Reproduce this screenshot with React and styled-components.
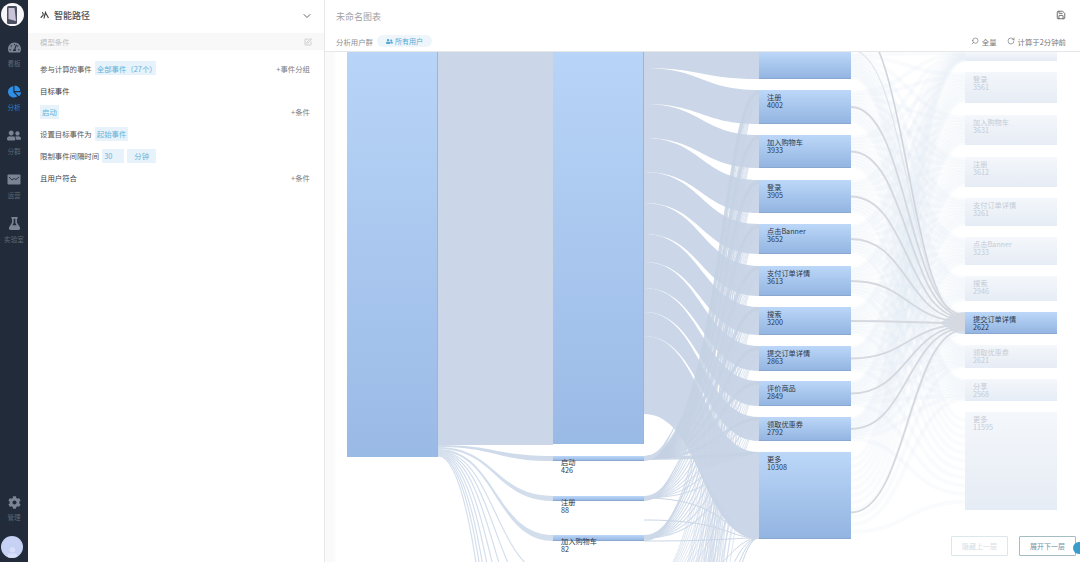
import React from "react";
import styled, { createGlobalStyle } from "styled-components";
import { ChevronDown, Save, Search, RotateCw, SquarePen } from "lucide-react";
import { FaTachometerAlt, FaChartPie, FaUserFriends, FaFlask, FaCog, FaUser } from "react-icons/fa";

const FONT = '"Noto Sans CJK SC", "Liberation Sans", sans-serif';

const col3 = [
  { top: 52, bottom: 79, from: 52, to: 68 },
  { name: "注册", value: 4002, top: 90, bottom: 124, from: 68, to: 104 },
  { name: "加入购物车", value: 3933, top: 135, bottom: 168, from: 104, to: 138 },
  { name: "登录", value: 3905, top: 180, bottom: 213, from: 138, to: 172 },
  { name: "点击Banner", value: 3652, top: 224, bottom: 254, from: 172, to: 203 },
  { name: "支付订单详情", value: 3613, top: 266, bottom: 296, from: 203, to: 234 },
  { name: "搜索", value: 3200, top: 307, bottom: 335, from: 234, to: 262 },
  { name: "提交订单详情", value: 2863, top: 346, bottom: 371, from: 262, to: 288 },
  { name: "评价商品", value: 2849, top: 381, bottom: 406, from: 288, to: 312 },
  { name: "领取优惠券", value: 2792, top: 417, bottom: 441, from: 312, to: 336 },
  { name: "更多", value: 10308, top: 452, bottom: 539, from: 336, to: 414 },
];

const col4 = [
  { top: 52, bottom: 61 },
  { name: "登录", value: 3561, top: 72, bottom: 103 },
  { name: "加入购物车", value: 3631, top: 115, bottom: 145 },
  { name: "注册", value: 3612, top: 157, bottom: 187 },
  { name: "支付订单详情", value: 3261, top: 198, bottom: 226 },
  { name: "点击Banner", value: 3233, top: 237, bottom: 265 },
  { name: "搜索", value: 2946, top: 276, bottom: 301 },
  { name: "提交订单详情", value: 2622, top: 312, bottom: 334, active: true },
  { name: "领取优惠券", value: 2621, top: 345, bottom: 368 },
  { name: "分享", value: 2568, top: 379, bottom: 401 },
  { name: "更多", value: 11595, top: 412, bottom: 510 },
];

const small = [
  { name: "启动", value: 426, top: 456, bottom: 461 },
  { name: "注册", value: 88, top: 496, bottom: 501 },
  { name: "加入购物车", value: 82, top: 535, bottom: 541 },
];

const ribbon = (x0, a0, b0, x1, a1, b1) => {
  const m = (x0 + x1) / 2;
  return `M${x0} ${a0}C${m} ${a0} ${m} ${a1} ${x1} ${a1}L${x1} ${b1}C${m} ${b1} ${m} ${b0} ${x0} ${b0}Z`;
};

const curve = (x0, y0, x1, y1, skew = 0) => {
  const m = (x0 + x1) / 2 + skew;
  return `M${x0} ${y0}C${m} ${y0} ${m} ${y1} ${x1} ${y1}`;
};

// a ribbon that runs out to a point, used where a small node fans out
const taper = (x0, a, b, x1, y) => {
  const m = (x0 + x1) / 2;
  return `M${x0} ${a}C${m} ${a} ${m} ${y} ${x1} ${y}C${m} ${y} ${m} ${b} ${x0} ${b}Z`;
};

// sources below the fold of the chart, they only show as stripes near the bottom
const lowSources = [590, 640, 700, 770, 850];

const SankeyLinks = () => (
  <Links viewBox="325 52 755 510" preserveAspectRatio="none">
    {/* column 3 to column 4, the faded mesh */}
    {col3.map((a, i) =>
      col4.map((b, j) => (
        <path
          key={`mesh-${i}-${j}`}
          d={curve(851, a.top + ((a.bottom - a.top) * (j + 1)) / 12, 965, b.top + ((b.bottom - b.top) * (i + 1)) / 12)}
          fill="none"
          stroke="#e2eaf5"
          strokeOpacity="0.2"
          strokeWidth="4"
        />
      ))
    )}

    {/* column 1 to column 2 */}
    <rect x="438" y="52" width="115" height="393" fill="#cbd7e8" />
    <path d={ribbon(438, 445, 447, 553, 456, 461)} fill="#cfdbeb" />
    <path d={ribbon(438, 447, 449, 553, 496, 501)} fill="#d2deec" />
    <path d={ribbon(438, 449, 451, 553, 535, 541)} fill="#d2deec" />
    {[575, 610, 650, 700, 760, 830, 900, 990].map((y, i) => (
      <path key={y} d={curve(438, 451 + i * 0.7, 553, y)} fill="none" stroke="#d4dfed" strokeWidth="1.2" />
    ))}

    {/* column 2 to column 3 */}
    {col3.map((n, i) => (
      <path key={`r-${i}`} d={ribbon(644, n.from, n.to, 759, n.top, n.bottom)} fill="#cbd7e8" />
    ))}
    {col3.slice(1).map((n, i) => (
      <path
        key={`arc-${i}`}
        d={curve(644, 458, 759, n.top + 2, 20)}
        fill="none"
        stroke="#c4d1e3"
        strokeOpacity="0.85"
        strokeWidth="3.5"
      />
    ))}
    {col3.slice(1).map((n) =>
      [498, 538].map((y, i) => (
        <path
          key={`small-${n.top}-${y}`}
          d={curve(644, y, 759, n.top + 5 + i * 2, 20)}
          fill="none"
          stroke="#c8d4e6"
          strokeOpacity="0.8"
          strokeWidth="1.1"
        />
      ))
    )}
    {col3.slice(1).map((n) =>
      lowSources.map((y, i) => (
        <path
          key={`low-${n.top}-${y}`}
          d={curve(644, y, 759, n.top + 8 + i, 20)}
          fill="none"
          stroke="#c8d4e6"
          strokeOpacity="0.7"
          strokeWidth="0.8"
        />
      ))
    )}
    <path d={taper(644, 456, 461, 700, 405)} fill="#cdd9e9" />
    <path d={taper(644, 496, 501, 705, 440)} fill="#cdd9e9" />
    <path d={taper(644, 535, 541, 712, 470)} fill="#cdd9e9" />
    {[498, 520, 541, 590, 640, 700, 770].map((y) => (
      <path key={`fan-${y}`} d={curve(644, y, 759, 538, 25)} fill="none" stroke="#cbd6e7" strokeWidth="1" />
    ))}
    <path d="M700 470C718 500 730 530 759 539L759 452Z" fill="#cbd7e8" />

    {/* the highlighted path into column 4 */}
    <path d="M940 323C950 316 955 312 965 312L965 334C955 334 950 330 940 323Z" fill="#d3deeb" />
    <path d={curve(851, 21, 965, 320)} fill="none" stroke="#d0d5dd" strokeWidth="1.6" />
    <path d={curve(851, 50, 965, 319)} fill="none" stroke="#e2e6ec" strokeWidth="1.2" />
    {col3.slice(1).map((n, i) => (
      <path
        key={`hl-${i}`}
        d={curve(851, (n.top + n.bottom) / 2 + (i === 9 ? 17 : 0), 965, 315 + i * 1.6)}
        fill="none"
        stroke="#d5d9df"
        strokeWidth="1.8"
      />
    ))}
  </Links>
);

const App = () => (
  <Page>
    <GlobalStyle />
    <Nav>
      <Logo>
        <svg width="14" height="20" viewBox="0 0 14 20">
          <rect x="2" y="1" width="10" height="18" rx="1.5" fill="#4a4f62" />
          <path d="M3.5 3h6l1.5 13-7.5-2z" fill="#c9c4d8" />
        </svg>
      </Logo>
      <NavItem>
        <FaTachometerAlt size={13} />
        <span>看板</span>
      </NavItem>
      <NavItem $active>
        <FaChartPie size={13} />
        <span>分析</span>
      </NavItem>
      <NavItem>
        <FaUserFriends size={14} />
        <span>分群</span>
      </NavItem>
      <NavItem>
        <svg width="14" height="13" viewBox="0 0 14 13">
          <rect x="0.5" y="1.5" width="13" height="10" rx="1" fill="#7b8493" />
          <path d="M2 4l3 3 2-1.5 2 1 3-2.5" fill="none" stroke="#2a3442" strokeWidth="1" />
        </svg>
        <span>运营</span>
      </NavItem>
      <NavItem>
        <FaFlask size={13} />
        <span>实验室</span>
      </NavItem>
      <NavBottom>
        <NavItem>
          <FaCog size={13} />
          <span>管理</span>
        </NavItem>
        <Avatar>
          <FaUser size={11} />
        </Avatar>
      </NavBottom>
    </Nav>

    <Panel>
      <PanelHead>
        <PanelTitle>
          <svg width="9" height="9" viewBox="0 0 9 9">
            <path d="M1 7c0-2 2.200-1.500 2.200-3.500S2 1.500 3 1.200M4 7.500C4.500 5 5 3 5.500 1.500 6 3 7.500 5 8.500 7" fill="none" stroke="#444" strokeWidth="1.200" />
          </svg>
          智能路径
        </PanelTitle>
        <ChevronDown size={12} color="#666" />
      </PanelHead>
      <ModelBar>
        模型条件
        <SquarePen size={8} color="#bbb" />
      </ModelBar>
      <PanelBody>
        <Row>
          <Inline>
            参与计算的事件
            <Tag $width={61}>全部事件（27个）</Tag>
          </Inline>
          <AddLink>+事件分组</AddLink>
        </Row>
        <Row>
          <Strong>目标事件</Strong>
        </Row>
        <Row>
          <Tag>启动</Tag>
          <AddLink>+条件</AddLink>
        </Row>
        <Row>
          <Inline>
            设置目标事件为
            <Tag>起始事件</Tag>
          </Inline>
        </Row>
        <Row>
          <Inline>
            限制事件间隔时间
            <Tag $width={22}>30</Tag>
            <Tag $width={29} $center>
              分钟
            </Tag>
          </Inline>
        </Row>
        <Row>
          <Strong>且用户符合</Strong>
          <AddLink>+条件</AddLink>
        </Row>
      </PanelBody>
    </Panel>

    <Main>
      <MainHead>
        <TitleRow>
          <Title>未命名图表</Title>
          <Save size={10} color="#555" />
        </TitleRow>
        <FilterRow>
          <Inline>
            分析用户群
            <Pill>
              <FaUserFriends size={7} />
              所有用户
            </Pill>
          </Inline>
          <Status>
            <StatusItem>
              <MirrorIcon>
                <Search size={8} />
              </MirrorIcon>
              全量
            </StatusItem>
            <StatusItem>
              <RotateCw size={8} />
              计算于2分钟前
            </StatusItem>
          </Status>
        </FilterRow>
      </MainHead>

      <Chart>
        <SankeyLinks />
        <Bar $left={347} $top={52} $height={405} />
        <Bar $left={553} $top={52} $height={392} />
        {small.map((n) => (
          <Node key={n.name} $left={553} $top={n.top} $height={n.bottom - n.top}>
            {n.name}
            <br />
            {n.value}
          </Node>
        ))}
        {col3.map((n) => (
          <Node key={n.top} $left={759} $top={n.top} $height={n.bottom - n.top}>
            {n.name}
            <br />
            {n.value}
          </Node>
        ))}
        {col4.map((n) => (
          <Node key={n.top} $left={965} $top={n.top} $height={n.bottom - n.top} $faded={!n.active}>
            {n.name}
            <br />
            {n.value}
          </Node>
        ))}
        <PageButton $left={951} $muted>
          隐藏上一层
        </PageButton>
        <PageButton $left={1019}>展开下一层</PageButton>
        <HelpDot />
      </Chart>
    </Main>
  </Page>
);

const GlobalStyle = createGlobalStyle`
  html, body {
    margin: 0;
    height: 100%;
    overflow: hidden;
    background: #fff;
    font-family: ${FONT};
  }
  * {
    box-sizing: border-box;
  }
`;

const Page = styled.div`
  display: grid;
  grid-template-columns: 28px 297px 1fr;
  width: 1080px;
  height: 562px;
  overflow: hidden;
  color: #555;
  font-size: 7.4px;
`;

const Nav = styled.nav`
  display: flex;
  flex-direction: column;
  align-items: center;
  padding-bottom: 4px;
  background: #212b39;
`;

const Logo = styled.div`
  display: flex;
  align-items: center;
  justify-content: center;
  flex: none;
  width: 23px;
  height: 23px;
  margin: 3px 4px 7px 0;
  border-radius: 50%;
  background: #f7f7f9;
`;

const NavItem = styled.div`
  display: flex;
  flex-direction: column;
  align-items: center;
  gap: 4.5px;
  width: 100%;
  height: 44px;
  padding-top: 8px;
  color: ${(props) => (props.$active ? "#2f8ee6" : "#7b8493")};
  font-size: 6.6px;
  line-height: 8px;

  svg {
    flex: none;
    height: 13px;
  }
  span {
    color: ${(props) => (props.$active ? "#2f7fc9" : "#5f6875")};
    white-space: nowrap;
  }
`;

const NavBottom = styled.div`
  display: flex;
  flex-direction: column;
  align-items: center;
  gap: 3px;
  width: 100%;
  margin-top: auto;

  ${NavItem} {
    height: auto;
    padding-top: 0;
  }
`;

const Avatar = styled.div`
  display: flex;
  align-items: flex-end;
  justify-content: center;
  width: 22px;
  height: 22px;
  margin: 12px 4px 0 0;
  border-radius: 50%;
  overflow: hidden;
  background: #c6d1f4;
  color: #d9e0f8;
`;

const Panel = styled.aside`
  display: flex;
  flex-direction: column;
  border-right: 1px solid #e6e7e9;
`;

const PanelHead = styled.div`
  display: flex;
  align-items: center;
  justify-content: space-between;
  flex: none;
  height: 33px;
  padding: 0 11px 2px 12px;
`;

const PanelTitle = styled.div`
  display: flex;
  align-items: center;
  gap: 5px;
  color: #4c4f55;
  font-size: 9px;
  font-weight: 500;
`;

const ModelBar = styled.div`
  display: flex;
  align-items: center;
  justify-content: space-between;
  flex: none;
  height: 17px;
  padding: 0 12px;
  background: #f8f8f9;
  color: #bcbfc4;
`;

const PanelBody = styled.div`
  display: flex;
  flex-direction: column;
  padding: 7.500px 14px 0 12px;
`;

const Row = styled.div`
  display: flex;
  align-items: center;
  justify-content: space-between;
  height: 21.800px;
`;

const Inline = styled.div`
  display: flex;
  align-items: center;
  gap: 3px;
  white-space: nowrap;
`;

const Strong = styled.div`
  color: #3d4046;
`;

const Tag = styled.span`
  display: inline-flex;
  align-items: center;
  justify-content: ${(props) => (props.$center ? "center" : "flex-start")};
  width: ${(props) => (props.$width ? `${props.$width}px` : "auto")};
  height: 14px;
  padding: 0 2px;
  background: #e7f2fa;
  color: #62b4dc;
  white-space: nowrap;
  overflow: hidden;
`;

const AddLink = styled.span`
  color: #7d8085;
`;

const Main = styled.main`
  display: flex;
  flex-direction: column;
  min-width: 0;
`;

const MainHead = styled.header`
  flex: none;
  height: 52px;
  padding: 0 14px 0 11px;
  border-bottom: 1px solid #e6e7e9;
`;

const TitleRow = styled.div`
  display: flex;
  align-items: center;
  justify-content: space-between;
  height: 32px;
  padding-bottom: 2px;
`;

const Title = styled.h1`
  margin: 3px 0 0;
  color: #a0a2a6;
  font-size: 9px;
  font-weight: 400;
`;

const FilterRow = styled.div`
  display: flex;
  align-items: center;
  justify-content: space-between;
  height: 18px;
  color: #8c8f94;
`;

const Pill = styled.span`
  display: inline-flex;
  align-items: center;
  gap: 2px;
  height: 12px;
  margin-left: 1px;
  padding: 0 9px;
  border-radius: 6px;
  background: #eef6fb;
  color: #58a9d4;
  font-size: 7px;
`;

const Status = styled.div`
  display: flex;
  align-items: center;
  gap: 10px;
  color: #74777c;
`;

const StatusItem = styled.span`
  display: inline-flex;
  align-items: center;
  gap: 3px;
`;

const MirrorIcon = styled.span`
  display: inline-flex;
  transform: scaleX(-1);
`;

const Chart = styled.div`
  position: relative;
  flex: 1;
  overflow: hidden;
  background: linear-gradient(to right, #fafafb 0, #fafafb 8px, #fff 12px);
`;

const Links = styled.svg`
  position: absolute;
  inset: 0;
  width: 755px;
  height: 510px;
`;

// chart positions come in page coordinates, the chart starts at 325,52
const Bar = styled.div.attrs((props) => ({
  style: { left: props.$left - 325, top: props.$top - 52, height: props.$height },
}))`
  position: absolute;
  width: 91px;
  background: linear-gradient(#b8d4f7, #9abae6);
  box-shadow: inset -1px 0 0 #9db4d4;
`;

const Node = styled.div.attrs((props) => ({
  style: { left: props.$left - 325, top: props.$top - 52, height: props.$height },
}))`
  position: absolute;
  width: ${(props) => (props.$left === 553 ? "91px" : "92px")};
  padding: ${(props) => (props.$left === 553 ? "2px" : "3px")} 0 0 8px;
  background: ${(props) =>
    props.$faded
      ? "linear-gradient(#f4f7fb, #e6ecf5)"
      : "linear-gradient(#bcd7f8, #92b4e1)"};
  box-shadow: ${(props) => (props.$faded ? "none" : "inset 0 -1px 0 #8aa7cf")};
  color: ${(props) => (props.$faded ? "#c5cbd5" : "#2f3742")};
  font-size: 7.2px;
  line-height: 8.200px;
  white-space: nowrap;
`;

const PageButton = styled.button`
  position: absolute;
  left: ${(props) => props.$left - 325}px;
  top: 484px;
  width: 57px;
  height: 20px;
  padding: 0;
  border: 1px solid ${(props) => (props.$muted ? "#dbe7ea" : "#a5bcc4")};
  border-radius: 1px;
  background: #fff;
  color: ${(props) => (props.$muted ? "#d5dde3" : "#6a93ab")};
  font-family: ${FONT};
  font-size: 7px;
`;

const HelpDot = styled.div`
  position: absolute;
  left: 748px;
  top: 490px;
  width: 12px;
  height: 12px;
  border-radius: 50%;
  background: #3a9ccb;
`;

export default App;
